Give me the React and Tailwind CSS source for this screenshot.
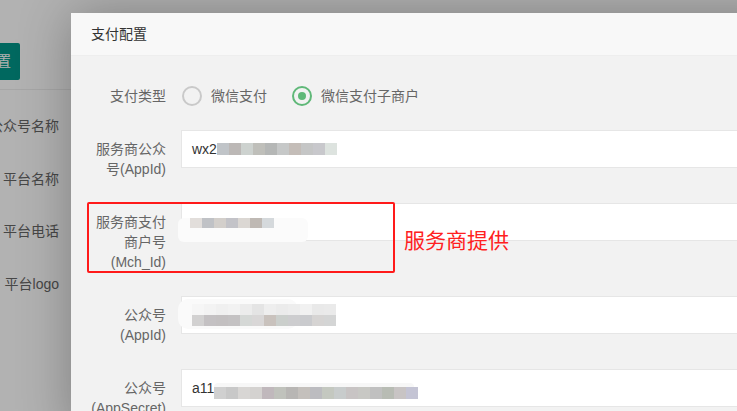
import React from "react";

const m1 = ["bg-[#c0c4c8]","bg-[#bcb8b6]","bg-[#cdd2cf]","bg-[#bfbfba]","bg-[#b5b7b6]","bg-[#c6c8c8]","bg-[#c4bdb8]","bg-[#c5c6c6]","bg-[#c8c8cc]","bg-[#dde3df]"];
const m2 = ["bg-[#e2dedb]","bg-[#c0c2c6]","bg-[#d3cfcb]","bg-[#c3c3c8]","bg-[#dbd7d3]","bg-[#bfb9b4]","bg-[#d5d9dc]"];
const m3top = ["bg-[#f6f6f6]","bg-[#f3f3f3]","bg-[#f0f0f0]","bg-[#f2f2f2]","bg-[#ececec]","bg-[#e4e4e4]","bg-[#eeeeee]","bg-[#ebebeb]","bg-[#ededed]","bg-[#f1f1f1]","bg-[#e9e9e9]","bg-[#eaeaea]"];
const m3 = ["bg-[#d2d1d1]","bg-[#c4c1c3]","bg-[#c3c0c1]","bg-[#c4c2c3]","bg-[#d5d8d6]","bg-[#d9d7d7]","bg-[#c9c2bd]","bg-[#cbcfcc]","bg-[#cdcdcf]","bg-[#cacbce]","bg-[#d6d4d3]","bg-[#d4d5d5]"];
const m4 = ["bg-[#d0d0d0]","bg-[#c8c8c8]","bg-[#d8d6d4]","bg-[#d4d2d0]","bg-[#c0b8bc]","bg-[#c0c2bc]","bg-[#b8b6b4]","bg-[#c4c0bc]","bg-[#bcbcc0]","bg-[#c4c8c0]","bg-[#c8cccc]","bg-[#c8c4c4]","bg-[#c8c8c4]","bg-[#c0c0c0]","bg-[#b8bcb4]","bg-[#c8c4c4]","bg-[#c4c4d4]"];

function Mosaic({ colors, h = "h-[12px]" }) {
  return (
    <div className="flex">
      {colors.map((c, i) => (
        <div key={i} className={`w-[12px] ${h} ${c}`} />
      ))}
    </div>
  );
}

function Row({ label, children }) {
  return (
    <div className="flex mb-[15px]">
      <div className="w-[110px] shrink-0 px-[15px] py-[9px] text-right leading-[20px] text-[14px] text-[#666]">
        {label}
      </div>
      <div className="flex-1 h-[38px] bg-white border border-[#e6e6e6] pl-[10px] flex items-center text-[14px] text-[#333] relative">
        {children}
      </div>
    </div>
  );
}

export default function App() {
  return (
    <div className="relative w-[737px] h-[411px] overflow-hidden bg-white font-['Liberation_Sans','Noto_Sans_CJK_SC',sans-serif]">
      {/* background page */}
      <div className="w-[80px]">
        <div className="h-[90px] border-b border-[#eeeeee] pt-[43px]">
          <div className="ml-[-60px] w-[80px] h-[37px] rounded-[2px] bg-[#009688] text-white text-[14px] flex items-center justify-end pr-[9px]">
            保存配置
          </div>
        </div>
        <div className="flex flex-col items-end pr-[21px] text-[14px] text-[#666] leading-[20px]">
          <div className="mt-[26px] whitespace-nowrap">公众号名称</div>
          <div className="mt-[33px]">平台名称</div>
          <div className="mt-[32px]">平台电话</div>
          <div className="mt-[33px]">平台logo</div>
        </div>
      </div>

      {/* overlay */}
      <div className="absolute inset-0 bg-black/30" />

      {/* modal */}
      <div className="absolute left-[71px] top-[13px] w-[720px] h-[420px] bg-[#f2f2f2] shadow-[1px_1px_50px_rgba(0,0,0,0.3)]">
        <div className="h-[43px] bg-[#f8f8f8] border-b border-[#eeeeee] pl-[20px] flex items-center text-[14px] text-[#333]">
          支付配置
        </div>
        <div className="pt-[21px]">
          <div className="flex mb-[15px]">
            <div className="w-[110px] shrink-0 px-[15px] py-[9px] text-right leading-[20px] text-[14px] text-[#666]">
              支付类型
            </div>
            <div className="flex items-center text-[14px] text-[#666] pl-[1px]">
              <div className="w-[20px] h-[20px] rounded-full border-[2px] border-[#c9c9c9]" />
              <span className="ml-[9px]">微信支付</span>
              <div className="ml-[25px] w-[20px] h-[20px] rounded-full border-[2px] border-[#5fb878] flex items-center justify-center">
                <div className="w-[8px] h-[8px] rounded-full bg-[#5fb878]" />
              </div>
              <span className="ml-[9px]">微信支付子商户</span>
            </div>
          </div>

          <Row label={<>服务商公众<br />号(AppId)</>}>
            <span>wx2</span>
            <Mosaic colors={m1} />
          </Row>

          <div className="flex mb-[15px]">
            <div className="w-[110px] shrink-0 px-[15px] pt-[9px] pb-[9px] text-right leading-[20px] text-[14px] text-[#666]">
              服务商支付<br />商户号<br />(Mch_Id)
            </div>
            <div className="flex-1 h-[38px] bg-white border border-[#e6e6e6] pl-[8px] pt-[14px] relative">
              <div className="absolute left-[-4px] top-[14px] w-[130px] h-[24px] rounded-[6px] bg-[#fbfbfb]" />
              <div className="relative">
                <Mosaic colors={m2} h="h-[10px]" />
              </div>
            </div>
          </div>

          <Row label={<>公众号<br />(AppId)</>}>
            <div className="absolute left-[-4px] top-[2px] w-[120px] h-[30px] rounded-[10px] bg-[#fafafa]" />
            <div className="relative flex flex-col">
              <Mosaic colors={m3top} h="h-[11px]" />
              <Mosaic colors={m3} h="h-[11px]" />
            </div>
          </Row>

          <Row label={<>公众号<br />(AppSecret)</>}>
            <span>a11</span>
            <div className="flex flex-col pt-[6px]">
              <div className="h-[4px] w-[200px] bg-[#f7f7f7] rounded-t-[6px]" />
              <Mosaic colors={m4} />
            </div>
          </Row>
        </div>
      </div>

      {/* annotation */}
      <div className="absolute left-[87px] top-[202px] w-[308px] h-[71px] border-[2px] border-[#ff1a1a] rounded-[2px]" />
      <div className="absolute left-[404px] top-[226px] text-[21px] leading-[29px] text-[#ff2020]">
        服务商提供
      </div>
    </div>
  );
}
